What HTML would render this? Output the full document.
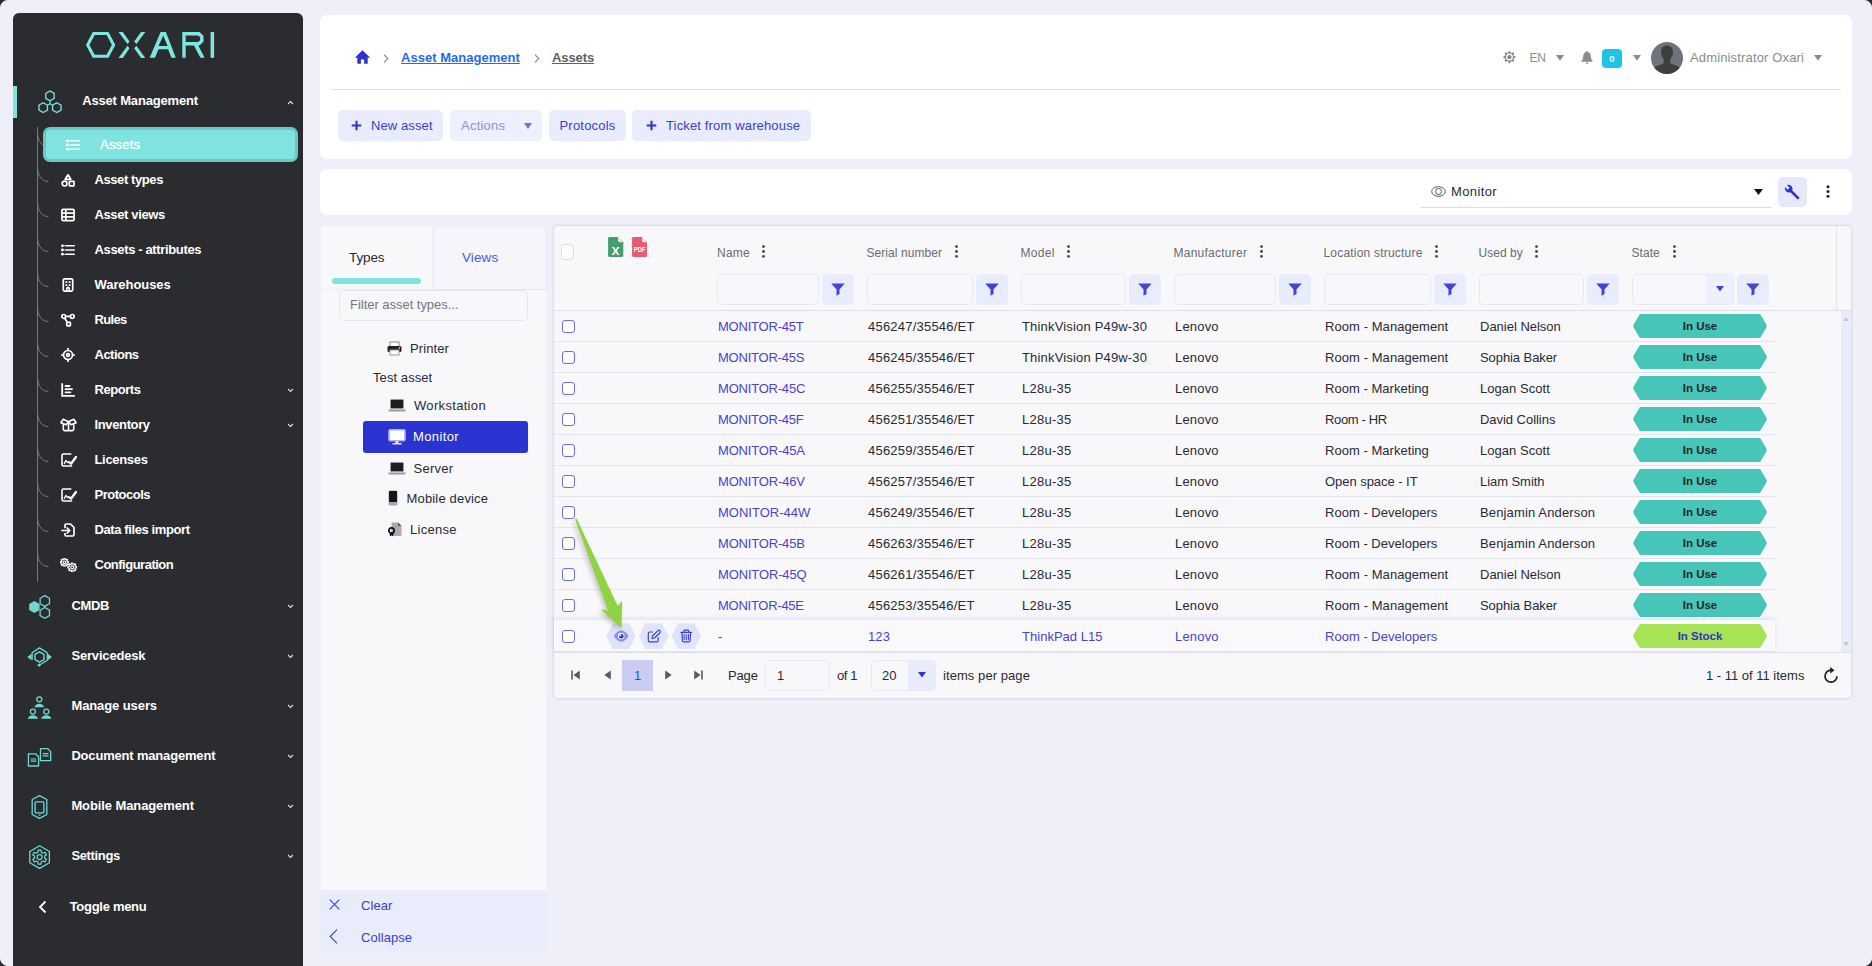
<!DOCTYPE html>
<html lang="en"><head><meta charset="utf-8"><title>Assets</title>
<style>
*{box-sizing:border-box;margin:0;padding:0}
html,body{width:1872px;height:966px;overflow:hidden}
body{background:#eeeff8;font-family:"Liberation Sans",sans-serif;font-size:13px;color:#2a2a33;position:relative}
a{text-decoration:none;color:inherit}
.abs,.sb *,.hd *,.pn *,.table *{position:absolute}
.corner{position:absolute;width:8px;height:8px;z-index:50}
.corner.tl{left:0;top:0;background:radial-gradient(circle at 8px 8px,rgba(0,0,0,0) 7.5px,#2a2a2a 8.5px)}
.corner.tr{right:0;top:0;background:radial-gradient(circle at 0 8px,rgba(0,0,0,0) 7.5px,#2a2a2a 8.5px)}
.corner.br{right:0;bottom:0;background:radial-gradient(circle at 0 0,rgba(0,0,0,0) 7.5px,#2a2a2a 8.5px)}
.corner.bl{left:0;bottom:0;background:radial-gradient(circle at 8px 0,rgba(0,0,0,0) 7.5px,#2a2a2a 8.5px)}
/* sidebar */
.sb{position:absolute;left:13px;top:13px;width:290px;height:953px;background:#2b2c2f;border-radius:6px 6px 0 0;color:#fff}
.sb .t{font-weight:bold;font-size:13px;white-space:nowrap;line-height:16px}
.sb .car{left:274px;width:7px;height:5px}
/* header */
.hd{position:absolute;left:0;top:0}
.card{position:absolute;background:#fff;border-radius:7px}
.btn{height:31px;border-radius:5px;background:#e8ecfc;color:#3b41c4;font-size:13px;line-height:31px;white-space:nowrap}
.btn span{top:0}
/* panel */
.pn{position:absolute;left:0;top:0}
.pn .ti{font-size:13px;line-height:16px;white-space:nowrap;color:#2a2a33}
/* table */
.tablebg{left:554px;top:226px;width:1297px;height:472px;background:#f8f8fb;border-radius:3px;box-shadow:0 0 2.500px rgba(0,0,0,.24)}
.row{left:0;width:1872px;height:31px}
.row::after{content:"";position:absolute;left:554px;top:30px;width:1221px;height:1px;background:#e4e5ec}
.row .c{top:8px;line-height:16px;white-space:nowrap;font-size:13px;color:#2a2a33}
.row .lnk{color:#4a43c9}
.cb{width:13px;height:13px;border:1.3px solid #6a6ee0;border-radius:3px;background:#fff}
.badge{left:1633px;top:3px;width:134px;height:24px}
.badge svg{left:0;top:0}
.badge b{left:0;top:1px;width:134px;text-align:center;line-height:23px;font-size:11.5px;color:#23262b}
.badge.stock b{color:#3b2fc9}
.row.hov{background:none}
.row.hov::before{content:"";position:absolute;left:554px;top:-1px;width:1221px;height:32px;box-shadow:0 -2px 5px rgba(130,135,215,.2);background:#f9f9fc}
.th{font-size:12px;color:#6b6b6e;top:244.700px;line-height:16px;white-space:nowrap}
.dots{width:3px;height:13px;top:245px}
.fin{top:274px;height:31px;border:1px solid #e6e8f6;border-radius:5px;background:#f8f8fb}
.fbt{top:274px;height:31px;width:32px;border-radius:5px;background:#e8ecfc}
.fbt svg{left:9px;top:9px}
.vscroll{left:1841px;top:311px;width:10px;height:341px;background:#e9ecfb}
.arrow{position:absolute;left:570px;top:510px;z-index:20;filter:drop-shadow(-1.500px 2px 2.500px rgba(0,0,0,.22))}
.pg{font-size:13px;line-height:16px;top:668px;white-space:nowrap;color:#2a2a33}
.vscroll i{left:2px;width:0;height:0;border-left:3.500px solid transparent;border-right:3.500px solid transparent}
.vscroll .up{top:6px;border-bottom:4px solid #c3c5cf}
.vscroll .dn{bottom:6px;border-top:4px solid #c3c5cf}

</style></head>
<body>
<div class="corner tl"></div><div class="corner tr"></div><div class="corner bl"></div><div class="corner br"></div>
<div class="sb">
<!-- logo -->
<svg style="left:67px;top:14px" width="140" height="36" viewBox="80 27 140 36"><g fill="none" stroke="#7ee6e1" stroke-width="3.100"><path d="M87.700 44.900L93.700 33.550H107.600L113.600 44.900L107.600 56.250H93.700Z"/><path d="M184 57.800V33.700H198.800L201.800 36.500V40.900L198.800 43.700H184" stroke-width="3.400"/></g><g fill="#7ee6e1"><path d="M118.500 31.900H122.800L129.500 41.600L127.500 44.100ZM118.500 57.900H122.800L129.500 48.200L127.500 45.700ZM145.300 31.900H141.100L134.200 41.600L136.400 44.100ZM145.300 57.900H141.100L134.200 48.200L136.400 45.700Z"/><path fill-rule="evenodd" d="M149.700 57.800L160.600 32H165.900L175.800 57.800H171.400L168.100 49.200H158.500L154.900 57.800ZM163.200 35.500L158.600 45.900H167.600Z"/><path d="M193.400 44.600H197.800L204.600 57.800H200.400Z"/><rect x="210.600" y="32" width="3.500" height="25.800"/></g></svg>
<!-- active group bar -->
<div style="left:0;top:73px;width:4px;height:32px;background:#7fe3df"></div>
<svg style="left:24px;top:75px" width="27" height="28" viewBox="37 88 27 28" fill="none" stroke="#7fe3df" stroke-width="1.300"><path d="M50.00 90.90L54.24 93.35L54.24 98.25L50.00 100.70L45.76 98.25L45.76 93.35ZM43.20 102.80L47.44 105.25L47.44 110.15L43.20 112.60L38.96 110.15L38.96 105.25ZM56.80 102.80L61.04 105.25L61.04 110.15L56.80 112.60L52.56 110.15L52.56 105.25ZM50 100.700V103.700L47.400 105.200M50 103.700L52.600 105.200"/></svg>
<span class="t" style="left:69.200px;top:80px;letter-spacing:-.17px">Asset Management</span>
<svg class="car" style="top:87px" viewBox="0 0 7 5"><path d="M1 4l2.500-2.500L6 4" fill="none" stroke="#ddd" stroke-width="1.1"/></svg>
<!-- tree line -->
<div style="left:24px;top:114px;width:1px;height:455px;background:#77797d"></div>
<svg style="left:24px;top:118px" width="14" height="17" viewBox="0 0 14 17"><path d="M.5 0C.5 9 4 15.500 11.500 15.500" fill="none" stroke="#77797d" stroke-width="1"/></svg>
<div style="left:30px;top:114px;width:255px;height:35px;background:#7fe4e0;border:3px solid #6cc7c3;border-radius:7px"></div>
<svg style="left:53px;top:125px" width="14" height="14" viewBox="0 0 14 14" ><g fill="#fff"><circle cx="1.400" cy="2.800" r="1.400"/><circle cx="1.400" cy="7" r="1.400"/><circle cx="1.400" cy="11.200" r="1.400"/><rect x="4.300" y="2" width="9.700" height="1.600" rx=".8"/><rect x="4.300" y="6.200" width="9.700" height="1.600" rx=".8"/><rect x="4.300" y="10.400" width="9.700" height="1.600" rx=".8"/><rect x="1" y="2.400" width="4" height=".8"/><rect x="1" y="6.600" width="4" height=".8"/><rect x="1" y="10.800" width="4" height=".8"/></g></svg>
<span class="t" style="left:87px;top:124px;font-weight:normal;-webkit-text-stroke:.300px #fff;letter-spacing:0.217px">Assets</span>
<svg style="left:24px;top:153px" width="14" height="17" viewBox="0 0 14 17"><path d="M.5 0C.5 9 4 15.500 11.500 15.500" fill="none" stroke="#77797d" stroke-width="1"/></svg>
<svg style="left:48px;top:160px" width="14" height="14" viewBox="0 0 14 14" ><g fill="none" stroke="#fff" stroke-width="1.7"><path d="M7 1.800L9.800 6.300H4.200Z" stroke-linejoin="round"/><circle cx="3.600" cy="10.600" r="2.400"/><rect x="8.400" y="8.300" width="4.600" height="4.600" rx=".5"/></g></svg>
<span class="t" style="left:81.500px;top:159px;letter-spacing:-0.408px">Asset types</span>
<svg style="left:24px;top:188px" width="14" height="17" viewBox="0 0 14 17"><path d="M.5 0C.5 9 4 15.500 11.500 15.500" fill="none" stroke="#77797d" stroke-width="1"/></svg>
<svg style="left:48px;top:195px" width="14" height="14" viewBox="0 0 14 14" ><g fill="none" stroke="#fff" stroke-width="1.700"><rect x=".9" y="1.400" width="12.200" height="11.200" rx="1.300"/><path d="M1 5.200h12M1 8.900h12M4.800 1.500v11"/></g></svg>
<span class="t" style="left:81.500px;top:194px;letter-spacing:-0.373px">Asset views</span>
<svg style="left:24px;top:223px" width="14" height="17" viewBox="0 0 14 17"><path d="M.5 0C.5 9 4 15.500 11.500 15.500" fill="none" stroke="#77797d" stroke-width="1"/></svg>
<svg style="left:48px;top:230px" width="14" height="14" viewBox="0 0 14 14" ><g fill="#fff"><circle cx="1.400" cy="2.800" r="1.400"/><circle cx="1.400" cy="7" r="1.400"/><circle cx="1.400" cy="11.200" r="1.400"/><rect x="4.300" y="2" width="9.700" height="1.600" rx=".8"/><rect x="4.300" y="6.200" width="9.700" height="1.600" rx=".8"/><rect x="4.300" y="10.400" width="9.700" height="1.600" rx=".8"/><rect x="1" y="2.400" width="4" height=".8"/><rect x="1" y="6.600" width="4" height=".8"/><rect x="1" y="10.800" width="4" height=".8"/></g></svg>
<span class="t" style="left:81.500px;top:229px;letter-spacing:-0.356px">Assets - attributes</span>
<svg style="left:24px;top:258px" width="14" height="17" viewBox="0 0 14 17"><path d="M.5 0C.5 9 4 15.500 11.500 15.500" fill="none" stroke="#77797d" stroke-width="1"/></svg>
<svg style="left:48px;top:265px" width="14" height="14" viewBox="0 0 14 14" ><g fill="none" stroke="#fff" stroke-width="1.700"><rect x="2.300" y=".9" width="9.400" height="12.200" rx="1.300"/></g><g fill="#fff"><rect x="4.500" y="3.200" width="1.800" height="1.800"/><rect x="7.700" y="3.200" width="1.800" height="1.800"/><rect x="4.500" y="6.200" width="1.800" height="1.800"/><rect x="7.700" y="6.200" width="1.800" height="1.800"/><path d="M5 13v-2.600a2 2 0 014 0V13h-1.500v-2.200h-1V13z"/></g></svg>
<span class="t" style="left:81.500px;top:264px;letter-spacing:-0.069px">Warehouses</span>
<svg style="left:24px;top:293px" width="14" height="17" viewBox="0 0 14 17"><path d="M.5 0C.5 9 4 15.500 11.500 15.500" fill="none" stroke="#77797d" stroke-width="1"/></svg>
<svg style="left:48px;top:300px" width="14" height="14" viewBox="0 0 14 14" ><g fill="none" stroke="#fff" stroke-width="1.700"><circle cx="2.700" cy="3.400" r="1.900"/><circle cx="11.300" cy="3.400" r="1.900"/><rect x="5.800" y="9.300" width="3.600" height="3.600" rx=".6"/><path d="M4.600 3.400h4.800M3.600 5L6.400 9.500"/></g></svg>
<span class="t" style="left:81.500px;top:299px;letter-spacing:-0.65px">Rules</span>
<svg style="left:24px;top:328px" width="14" height="17" viewBox="0 0 14 17"><path d="M.5 0C.5 9 4 15.500 11.500 15.500" fill="none" stroke="#77797d" stroke-width="1"/></svg>
<svg style="left:48px;top:335px" width="14" height="14" viewBox="0 0 14 14" ><g fill="none" stroke="#fff" stroke-width="1.700"><circle cx="7" cy="7" r="4.500"/><circle cx="7" cy="7" r="1.400"/><path d="M7 0v2.500M7 11.500V14M0 7h2.500M11.500 7H14"/></g></svg>
<span class="t" style="left:81.500px;top:334px;letter-spacing:-0.512px">Actions</span>
<svg style="left:24px;top:363px" width="14" height="17" viewBox="0 0 14 17"><path d="M.5 0C.5 9 4 15.500 11.500 15.500" fill="none" stroke="#77797d" stroke-width="1"/></svg>
<svg style="left:48px;top:370px" width="14" height="14" viewBox="0 0 14 14" ><g fill="none" stroke="#fff" stroke-width="1.800" stroke-linecap="round"><path d="M1.200 .9v12h12M4.500 3h4M4.500 6.200h6.500M4.500 9.400h4.800"/></g></svg>
<span class="t" style="left:81.500px;top:369px;letter-spacing:-0.453px">Reports</span>
<svg class="car" style="top:375px" viewBox="0 0 7 5"><path d="M1 1l2.500 2.500L6 1" fill="none" stroke="#ddd" stroke-width="1.100"/></svg>
<svg style="left:24px;top:398px" width="14" height="17" viewBox="0 0 14 17"><path d="M.5 0C.5 9 4 15.500 11.500 15.500" fill="none" stroke="#77797d" stroke-width="1"/></svg>
<svg style="left:46.5px;top:405px" width="17" height="14" viewBox="0 0 17 14" ><g fill="none" stroke="#fff" stroke-width="1.600" stroke-linejoin="round"><path d="M3.300 6.500V11.300Q3.300 12.600 4.600 12.600H12.400Q13.700 12.600 13.700 11.300V6.500M8.500 3.800V12.600M8.500 3.800L3.200 1.300L.9 4.700L6 6.700ZM8.500 3.800L13.800 1.300L16.100 4.700L11 6.700Z"/></g></svg>
<span class="t" style="left:81.500px;top:404px;letter-spacing:-0.364px">Inventory</span>
<svg class="car" style="top:410px" viewBox="0 0 7 5"><path d="M1 1l2.500 2.500L6 1" fill="none" stroke="#ddd" stroke-width="1.100"/></svg>
<svg style="left:24px;top:433px" width="14" height="17" viewBox="0 0 14 17"><path d="M.5 0C.5 9 4 15.500 11.500 15.500" fill="none" stroke="#77797d" stroke-width="1"/></svg>
<svg style="left:47.5px;top:440px" width="16" height="14" viewBox="0 0 16 14" ><g fill="none" stroke="#fff" stroke-linejoin="round" stroke-linecap="round"><path d="M9.800 1H2.600Q1 1 1 2.600V11.400Q1 13 2.600 13H10.600" stroke-width="1.600"/><path d="M3.200 10.600L5 7.400L6.400 9.600L7.600 8.600" stroke-width="1.200"/><path d="M8.300 9.300L10 10.700L15 4" stroke-width="2.300"/></g></svg>
<span class="t" style="left:81.500px;top:439px;letter-spacing:-0.32px">Licenses</span>
<svg style="left:24px;top:468px" width="14" height="17" viewBox="0 0 14 17"><path d="M.5 0C.5 9 4 15.500 11.500 15.500" fill="none" stroke="#77797d" stroke-width="1"/></svg>
<svg style="left:47.5px;top:475px" width="16" height="14" viewBox="0 0 16 14" ><g fill="none" stroke="#fff" stroke-linejoin="round" stroke-linecap="round"><path d="M9.800 1H2.600Q1 1 1 2.600V11.400Q1 13 2.600 13H10.600" stroke-width="1.600"/><path d="M3.200 10.600L5 7.400L6.400 9.600L7.600 8.600" stroke-width="1.200"/><path d="M8.300 9.300L10 10.700L15 4" stroke-width="2.300"/></g></svg>
<span class="t" style="left:81.500px;top:474px;letter-spacing:-0.482px">Protocols</span>
<svg style="left:24px;top:503px" width="14" height="17" viewBox="0 0 14 17"><path d="M.5 0C.5 9 4 15.500 11.500 15.500" fill="none" stroke="#77797d" stroke-width="1"/></svg>
<svg style="left:48px;top:510px" width="14" height="14" viewBox="0 0 14 14" ><g fill="none" stroke="#fff" stroke-width="1.700" stroke-linejoin="round" stroke-linecap="round"><path d="M4 4.500V2.200Q4 1 5.200 1H9.500L13 4.500v7.300Q13 13 11.800 13H5.200Q4 13 4 11.800V10.500M.8 7.500H8.500M6.200 5L8.700 7.500 6.200 10"/></g></svg>
<span class="t" style="left:81.500px;top:509px;letter-spacing:-0.397px">Data files import</span>
<svg style="left:24px;top:538px" width="14" height="17" viewBox="0 0 14 17"><path d="M.5 0C.5 9 4 15.500 11.500 15.500" fill="none" stroke="#77797d" stroke-width="1"/></svg>
<svg style="left:46.5px;top:545px" width="17" height="14" viewBox="0 0 17 14" ><g fill="none" stroke="#fff" stroke-width="1.150" stroke-linejoin="round"><path d="M3.77 0.35L5.03 0.35L5.08 1.48L5.92 1.83L6.75 1.06L7.64 1.95L6.87 2.78L7.22 3.62L8.35 3.67L8.35 4.93L7.22 4.98L6.87 5.82L7.64 6.65L6.75 7.54L5.92 6.77L5.08 7.12L5.03 8.25L3.77 8.25L3.72 7.12L2.88 6.77L2.05 7.54L1.16 6.65L1.93 5.82L1.58 4.98L0.45 4.93L0.45 3.67L1.58 3.62L1.93 2.78L1.16 1.95L2.05 1.06L2.88 1.83L3.72 1.48Z"/><circle cx="4.400" cy="4.300" r="1.300"/><path d="M11.51 4.95L12.89 4.95L12.95 6.19L13.87 6.57L14.79 5.74L15.76 6.71L14.93 7.63L15.31 8.55L16.55 8.61L16.55 9.99L15.31 10.05L14.93 10.97L15.76 11.89L14.79 12.86L13.87 12.03L12.95 12.41L12.89 13.65L11.51 13.65L11.45 12.41L10.53 12.03L9.61 12.86L8.64 11.89L9.47 10.97L9.09 10.05L7.85 9.99L7.85 8.61L9.09 8.55L9.47 7.63L8.64 6.71L9.61 5.74L10.53 6.57L11.45 6.19Z"/><circle cx="12.200" cy="9.300" r="1.500"/></g></svg>
<span class="t" style="left:81.500px;top:544px;letter-spacing:-0.5px">Configuration</span>
<svg style="left:14px;top:581px" width="25" height="26" viewBox="-0.500 0 25 26" ><path d="M6.90 7.00L12.10 10.00L12.10 16.00L6.90 19.00L1.70 16.00L1.70 10.00Z" fill="#6fd8d3"/><g fill="none" stroke="#6fd8d3" stroke-width="1.300"><path d="M17.30 1.60L21.98 4.30L21.98 9.70L17.30 12.40L12.62 9.70L12.62 4.30Z"/><path d="M17.30 13.50L21.98 16.20L21.98 21.60L17.30 24.30L12.62 21.60L12.62 16.20Z"/></g></svg>
<span class="t" style="left:58.400px;top:585px;letter-spacing:-0.298px">CMDB</span>
<svg class="car" style="top:591px" viewBox="0 0 7 5"><path d="M1 1l2.500 2.500L6 1" fill="none" stroke="#ddd" stroke-width="1.100"/></svg>
<svg style="left:14px;top:631px" width="25" height="26" viewBox="-0.500 0 25 26" ><g fill="none" stroke="#6fd8d3" stroke-width="1.300" stroke-linejoin="round"><path d="M12.00 7.80L16.50 10.40L16.50 15.60L12.00 18.20L7.50 15.60L7.50 10.40Z" stroke-width="1.400"/><path d="M4.600 16V8.800L12 3.900L19.800 8.800V16.200L12.500 20.800"/></g><path d="M4 9.800V16.200L-.2 13ZM20.400 9.800V16.200L24.400 13Z" fill="#6fd8d3"/><circle cx="11.600" cy="21.100" r="1.500" fill="#6fd8d3"/></svg>
<span class="t" style="left:58.400px;top:635px;letter-spacing:-0.169px">Servicedesk</span>
<svg class="car" style="top:641px" viewBox="0 0 7 5"><path d="M1 1l2.500 2.500L6 1" fill="none" stroke="#ddd" stroke-width="1.100"/></svg>
<svg style="left:14px;top:681px" width="25" height="26" viewBox="-0.500 0 25 26" ><g fill="none" stroke="#6fd8d3" stroke-width="1.300"><circle cx="11.800" cy="5.300" r="2.500"/><circle cx="5.400" cy="17.600" r="2.500"/><circle cx="18.800" cy="17.600" r="2.500"/></g><g fill="#6fd8d3"><path d="M7 13.200Q8 9.700 11.800 9.700T16.700 13.200Z"/><path d="M.2 24.800Q1.400 21.300 5.400 21.300T10.600 24.800Z"/><path d="M13.600 24.800Q14.800 21.300 18.800 21.300T24 24.800Z"/></g></svg>
<span class="t" style="left:58.400px;top:685px;letter-spacing:-0.091px">Manage users</span>
<svg class="car" style="top:691px" viewBox="0 0 7 5"><path d="M1 1l2.500 2.500L6 1" fill="none" stroke="#ddd" stroke-width="1.100"/></svg>
<svg style="left:14px;top:731px" width="25" height="26" viewBox="-0.500 0 25 26" ><g fill="none" stroke="#6fd8d3" stroke-width="1.300" stroke-linejoin="round"><path d="M13 4.700H20.300L23.200 7.600V16.600H13ZM.9 9.800H8.200L11.100 12.700V22H.9Z"/><path d="M15.300 9.700H21M15.300 11.900H21M3.100 15H8.800M3.100 17.200H8.800" stroke-width="1.200"/></g></svg>
<span class="t" style="left:58.400px;top:735px;letter-spacing:-0.181px">Document management</span>
<svg class="car" style="top:741px" viewBox="0 0 7 5"><path d="M1 1l2.500 2.500L6 1" fill="none" stroke="#ddd" stroke-width="1.100"/></svg>
<svg style="left:14px;top:781px" width="25" height="26" viewBox="-0.500 0 25 26" ><g fill="none" stroke="#6fd8d3" stroke-width="1.300" stroke-linejoin="round"><path d="M12 1.600L19.300 5.500V20.500L12 24.300L4.700 20.500V5.500Z"/><rect x="7.600" y="7.900" width="8.800" height="11" rx="1"/><path d="M11 21H13" stroke-width="1.100"/></g></svg>
<span class="t" style="left:58.400px;top:785px;letter-spacing:-0.102px">Mobile Management</span>
<svg class="car" style="top:791px" viewBox="0 0 7 5"><path d="M1 1l2.500 2.500L6 1" fill="none" stroke="#ddd" stroke-width="1.100"/></svg>
<svg style="left:14px;top:831px" width="25" height="26" viewBox="-0.500 0 25 26" ><g fill="none" stroke="#6fd8d3" stroke-width="1.300" stroke-linejoin="round"><path d="M12.10 1.80L21.89 7.45L21.89 18.75L12.10 24.40L2.31 18.75L2.31 7.45Z"/><path d="M10.60 6.06L13.60 6.06L13.71 8.15L15.58 9.24L17.45 8.28L18.95 10.88L17.19 12.02L17.19 14.18L18.95 15.32L17.45 17.92L15.58 16.96L13.71 18.05L13.60 20.14L10.60 20.14L10.49 18.05L8.62 16.96L6.75 17.92L5.25 15.32L7.01 14.18L7.01 12.02L5.25 10.88L6.75 8.28L8.62 9.24L10.49 8.15Z" stroke-width="1.200"/><circle cx="12.100" cy="13.100" r="2.500" stroke-width="1.200"/></g></svg>
<span class="t" style="left:58.400px;top:835px;letter-spacing:-0.34px">Settings</span>
<svg class="car" style="top:841px" viewBox="0 0 7 5"><path d="M1 1l2.500 2.500L6 1" fill="none" stroke="#ddd" stroke-width="1.100"/></svg>
<svg style="left:25px;top:887px" width="9" height="14" viewBox="0 0 9 14"><path d="M7.500 1.500L2 7l5.500 5.500" fill="none" stroke="#fff" stroke-width="1.8"/></svg>
<span class="t" style="left:56.700px;top:886px;letter-spacing:-.29px">Toggle menu</span>
</div>

<div class="hd">
<div class="card" style="left:320px;top:15px;width:1532px;height:144px"></div>
<!-- breadcrumb -->
<svg style="left:355px;top:50px" width="15" height="14" viewBox="0 0 15 14"><path d="M7.500 .3L.3 7.200Q0 7.600.6 7.800H2.300V13.300Q2.300 13.800 2.800 13.800H5.900V9.600H9.100V13.800H12.200Q12.700 13.800 12.700 13.300V7.800H14.400Q15 7.600 14.700 7.200Z" fill="#2b33d1"/></svg>
<svg style="left:383px;top:54px" width="6" height="9" viewBox="0 0 6 9"><path d="M1 .7L4.700 4.500 1 8.300" fill="none" stroke="#8a8a90" stroke-width="1.200"/></svg>
<a style="left:401px;top:50px;font-weight:bold;font-size:13px;line-height:16px;color:#1f6bf2;text-decoration:underline;white-space:nowrap;letter-spacing:.02px">Asset Management</a>
<svg style="left:534px;top:54px" width="6" height="9" viewBox="0 0 6 9"><path d="M1 .7L4.700 4.500 1 8.300" fill="none" stroke="#7d86d8" stroke-width="1.200"/></svg>
<a style="left:552px;top:50px;font-weight:bold;font-size:13px;line-height:16px;color:#5d5f66;text-decoration:underline;white-space:nowrap;letter-spacing:-.1px">Assets</a>
<div style="left:331px;top:89px;width:1510px;height:1px;background:#dfe1e6"></div>
<!-- right tools -->
<svg style="left:1502px;top:50px" width="15" height="15" viewBox="0 0 15 15"><path d="M7.40 0.40L9.12 2.94L12.14 2.36L11.56 5.38L14.10 7.10L11.56 8.82L12.14 11.84L9.12 11.26L7.40 13.80L5.68 11.26L2.66 11.84L3.24 8.82L0.70 7.10L3.24 5.38L2.66 2.36L5.68 2.94Z" fill="#8b8b8b"/><circle cx="7.400" cy="7.100" r="3.500" fill="#fff"/><circle cx="7.400" cy="7.100" r="2.200" fill="#8b8b8b"/></svg>
<span style="left:1529.500px;top:50px;font-size:12px;line-height:16px;color:#8a8a8e;letter-spacing:-.2px">EN</span>
<svg style="left:1556px;top:55px" width="8" height="6" viewBox="0 0 8 6"><path d="M0 0h8L4 5.800z" fill="#8b8b8b"/></svg>
<svg style="left:1581.300px;top:51px" width="12" height="14" viewBox="0 0 12 14"><path d="M6 0Q6.800 0 6.800 1Q9.800 1.800 9.800 5.500Q9.800 8.700 11.500 9.800V10.700H.5V9.800Q2.200 8.700 2.200 5.500Q2.200 1.800 5.200 1Q5.200 0 6 0ZM4.700 11.600H7.300Q7.300 13 6 13Q4.700 13 4.700 11.600Z" fill="#8c8c8c"/></svg>
<div style="left:1602px;top:49px;width:20px;height:19px;border-radius:4px;background:#1cc4e8"></div>
<span style="left:1602px;top:51px;width:20px;text-align:center;font-size:9.500px;line-height:16px;color:#fff;font-weight:bold">0</span>
<svg style="left:1633px;top:55px" width="8" height="6" viewBox="0 0 8 6"><path d="M0 0h8L4 5.800z" fill="#8b8b8b"/></svg>
<svg style="left:1651px;top:42px" width="32" height="32" viewBox="0 0 32 32"><defs><clipPath id="av"><circle cx="16" cy="16" r="16"/></clipPath></defs><circle cx="16" cy="16" r="16" fill="#6d747c"/><g clip-path="url(#av)" fill="#3e3f41"><rect x="10" y="3.600" width="12" height="13.600" rx="5.500" ry="6"/><path d="M3 32V27Q3.300 24.800 7 23.600L12.600 21.400V15H19.400V21.400L25 23.600Q28.700 24.800 29 27V32Z"/></g></svg>
<span style="left:1690px;top:50px;font-size:13px;line-height:16px;color:#8a8a8e;white-space:nowrap;letter-spacing:0.147px">Administrator Oxari</span>
<svg style="left:1814px;top:55px" width="8" height="6" viewBox="0 0 8 6"><path d="M0 0h8L4 5.800z" fill="#8b8b8b"/></svg>
<!-- buttons -->
<div class="btn" style="left:338px;top:110px;width:105px"><svg style="left:13px;top:10px" width="11" height="11" viewBox="0 0 11 11"><path d="M5.500 .7v9.600M.7 5.500h9.600" stroke="#2b33d1" stroke-width="2.100" fill="none"/></svg><span style="left:33px;letter-spacing:0.101px">New asset</span></div>
<div class="btn" style="left:450px;top:110px;width:92px;background:#eef0fd;color:#8b8fdc"><span style="left:11px;letter-spacing:0.228px">Actions</span><i style="left:64px;top:0;width:1px;height:31px;background:#e9ebfa"></i><svg style="left:74px;top:13px" width="8" height="6" viewBox="0 0 8 6"><path d="M0 0h8L4 6z" fill="#6f74d6"/></svg></div>
<div class="btn" style="left:549px;top:110px;width:77px"><span style="left:10.500px;letter-spacing:0.201px">Protocols</span></div>
<div class="btn" style="left:632px;top:110px;width:179px"><svg style="left:14px;top:10px" width="11" height="11" viewBox="0 0 11 11"><path d="M5.500 .7v9.600M.7 5.500h9.600" stroke="#2b33d1" stroke-width="2.100" fill="none"/></svg><span style="left:34px;letter-spacing:0.15px">Ticket from warehouse</span></div>
<!-- second card -->
<div class="card" style="left:320px;top:169px;width:1532px;height:46px"></div>
<svg style="left:1431px;top:185px" width="15" height="13" viewBox="0 0 15 13"><g fill="none" stroke="#55555c" stroke-width="1"><ellipse cx="7.500" cy="6.500" rx="6.800" ry="4.800"/><circle cx="7.500" cy="6.500" r="3"/></g></svg>
<span style="left:1451px;top:184px;font-size:13px;line-height:16px;color:#2a2a33;letter-spacing:0.376px">Monitor</span>
<svg style="left:1754px;top:189px" width="9" height="6" viewBox="0 0 9 6"><path d="M0 0h9L4.500 6z" fill="#111"/></svg>
<div style="left:1421px;top:207px;width:350px;height:1px;background:#dcdde3"></div>
<div style="left:1778px;top:177px;width:29px;height:30px;border-radius:5px;background:#e5e9fb"></div>
<svg style="left:1784px;top:184px" width="16" height="16" viewBox="0 0 16 16"><path d="M15.300 13.400L8.300 6.400Q9.200 4 7.300 2.100Q5.300 .2 2.900 1L5.700 3.800 3.800 5.700 1 2.900Q.1 5.300 2.100 7.300Q4 9.200 6.400 8.300L13.400 15.300Q13.800 15.600 14.200 15.300L15.300 14.200Q15.600 13.800 15.300 13.400Z" fill="#2b33d1"/></svg>
<svg style="left:1826px;top:185px" width="4" height="13" viewBox="0 0 4 13"><g fill="#222"><circle cx="2" cy="1.700" r="1.500"/><circle cx="2" cy="6.500" r="1.500"/><circle cx="2" cy="11.300" r="1.500"/></g></svg>
</div>

<div class="pn">
<div style="left:321px;top:226px;width:111px;height:64px;background:#f8f8fb;border-radius:3px 3px 0 0"></div>
<div style="left:434px;top:226px;width:113px;height:64px;background:#f5f5fa;border-radius:3px 3px 0 0;border:1px solid #e9ecfa;border-bottom:1px solid #e2e4ee"></div><div style="left:321px;top:289px;width:113px;height:1px;background:#ededf3"></div>
<div style="left:321px;top:290px;width:225px;height:601px;background:#f8f8fb;border-bottom:1px solid #e2e3ea"></div>
<span style="left:349px;top:250px;font-size:13.500px;line-height:16px;color:#2a2a33;letter-spacing:-0.104px">Types</span>
<div style="left:332px;top:278px;width:89px;height:6px;border-radius:3px;background:#7fe3df"></div>
<span style="left:462px;top:250px;font-size:13.500px;line-height:16px;color:#3e5cf0;letter-spacing:0.108px">Views</span>
<div style="left:339px;top:290px;width:189px;height:31px;border:1px solid #e3e6f7;border-radius:5px;background:#f8f8fb"></div>
<span style="left:350px;top:297px;font-size:13px;line-height:16px;color:#75757c;white-space:nowrap;letter-spacing:-0.029px">Filter asset types...</span>
<!-- tree -->
<svg style="left:387px;top:341px" width="15" height="15" viewBox="0 0 15 15"><rect x="3" y="1" width="9" height="5" fill="#fff" stroke="#888" stroke-width="1"/><rect x=".5" y="5" width="14" height="6" rx="1.500" fill="#222"/><rect x="3" y="9" width="9" height="5" fill="#fff" stroke="#999" stroke-width="1"/><circle cx="12.300" cy="7" r=".8" fill="#fff"/></svg>
<span class="ti" style="left:410px;top:341px;letter-spacing:0.102px">Printer</span>
<span class="ti" style="left:373px;top:370px;letter-spacing:0.075px">Test asset</span>
<svg style="left:388px;top:399px" width="18" height="13" viewBox="0 0 18 13"><rect x="2.500" y=".5" width="13" height="9" rx="1" fill="#1d1d22" stroke="#999" stroke-width="1"/><path d="M0 10.500h18l-1 2H1z" fill="#9a9a9f"/></svg>
<span class="ti" style="left:414px;top:398px;letter-spacing:0.321px">Workstation</span>
<div style="left:363px;top:421px;width:165px;height:32px;border-radius:3px;background:#2b33d1"></div>
<svg style="left:388px;top:429px" width="18" height="16" viewBox="0 0 18 16"><rect x="1" y=".8" width="16" height="11" rx="1.200" fill="#fff" stroke="#b9a8ee" stroke-width="1.600"/><path d="M7.500 12h3v2h-3zM4.500 14h9v1.500h-9z" fill="#e8e4fb"/></svg>
<span class="ti" style="left:413px;top:429px;color:#fff;letter-spacing:0.376px">Monitor</span>
<svg style="left:388px;top:462px" width="18" height="13" viewBox="0 0 18 13"><rect x="2.500" y=".5" width="13" height="9" rx="1" fill="#1d1d22" stroke="#999" stroke-width="1"/><path d="M0 10.500h18l-1 2H1z" fill="#9a9a9f"/></svg>
<span class="ti" style="left:413.500px;top:461px;letter-spacing:0.282px">Server</span>
<svg style="left:388px;top:490px" width="10" height="16" viewBox="0 0 10 16"><rect x=".5" y=".5" width="9" height="15" rx="1.500" fill="#a5a5aa"/><rect x="1" y="1" width="8" height="11" rx=".8" fill="#17171b"/></svg>
<span class="ti" style="left:406.500px;top:491px;letter-spacing:0.168px">Mobile device</span>
<svg style="left:387px;top:521px" width="16" height="16" viewBox="0 0 16 16"><path d="M4.500 1.500H11L14.500 5v10h-10z" fill="#aaaab0"/><path d="M11 1.500V5h3.500z" fill="#55555a"/><circle cx="4.500" cy="9.500" r="2.700" fill="none" stroke="#111" stroke-width="1.700"/><path d="M2.800 11.500v4l1.700-1.300 1.700 1.300v-4z" fill="#111"/></svg>
<span class="ti" style="left:410px;top:522px;letter-spacing:0.265px">License</span>
<!-- clear/collapse -->
<div style="left:320px;top:890px;width:227px;height:63px;background:#e9ecfb;border-radius:0 0 7px 7px"></div>
<svg style="left:329px;top:899px" width="11" height="11" viewBox="0 0 11 11"><path d="M.7 .7l9.600 9.600M10.300 .7L.7 10.300" stroke="#3b41c4" stroke-width="1.100" fill="none"/></svg>
<span class="ti" style="left:361px;top:898px;color:#3b41c4;letter-spacing:0.059px">Clear</span>
<svg style="left:329px;top:929px" width="9" height="15" viewBox="0 0 9 15"><path d="M8 .7L1.200 7.500 8 14.300" stroke="#3b41c4" stroke-width="1.100" fill="none"/></svg>
<span class="ti" style="left:361px;top:930px;color:#3b41c4;letter-spacing:0.074px">Collapse</span>
</div>

<div class="table">
<div class="tablebg"></div>
<div style="left:554px;top:310px;width:1297px;height:1px;background:#dedfe6"></div>
<div style="left:1836px;top:226px;width:1px;height:84px;background:#e3e4ea"></div>
<span style="left:561px;top:244px;width:13px;height:16px;border:1px solid #dcdde6;border-radius:4px;background:#fff"></span>
<svg style="left:608.300px;top:236.500px" width="15.400" height="20" viewBox="0 0 16 21"><path d="M1.500 0H10.500L16 5.500V19.500Q16 21 14.500 21H1.500Q0 21 0 19.500V1.500Q0 0 1.500 0Z" fill="#459e6f"/><path d="M10.500 0V4Q10.500 5.500 12 5.500H16Z" fill="#e4f3ea"/><path d="M4 10.500h2.300L8 13.300 9.700 10.500H12L9.200 14.700 12.100 19H9.800L8 16.100 6.200 19H3.900L6.800 14.700Z" fill="#fff"/></svg>
<svg style="left:631.500px;top:236.500px" width="15.400" height="20" viewBox="0 0 16 21"><path d="M1.500 0H10.500L16 5.500V19.500Q16 21 14.500 21H1.500Q0 21 0 19.500V1.500Q0 0 1.500 0Z" fill="#e45c6e"/><path d="M10.500 0V4Q10.500 5.500 12 5.500H16Z" fill="#fbe3e6"/><text x="8" y="15.500" font-family="Liberation Sans, sans-serif" font-size="7" font-weight="bold" fill="#fff" text-anchor="middle" textLength="12.500" lengthAdjust="spacingAndGlyphs" style="position:static">PDF</text></svg>
<span class="th" style="left:717px;letter-spacing:0.23px">Name</span>
<svg class="dots" style="left:762.0px" viewBox="0 0 3 13"><g fill="#44444a"><circle cx="1.500" cy="1.600" r="1.400"/><circle cx="1.500" cy="6.500" r="1.400"/><circle cx="1.500" cy="11.400" r="1.400"/></g></svg>
<div class="fin" style="left:717px;width:102px"></div>
<div class="fbt" style="left:822px"><svg width="14" height="13" viewBox="0 0 14 13"><path d="M.3 .5h13.400L8.500 6.500V11L5.500 12.800V6.500z" fill="#3f46d2"/></svg></div>
<span class="th" style="left:866.5px;letter-spacing:0.058px">Serial number</span>
<svg class="dots" style="left:955.0px" viewBox="0 0 3 13"><g fill="#44444a"><circle cx="1.500" cy="1.600" r="1.400"/><circle cx="1.500" cy="6.500" r="1.400"/><circle cx="1.500" cy="11.400" r="1.400"/></g></svg>
<div class="fin" style="left:867px;width:106px"></div>
<div class="fbt" style="left:976px"><svg width="14" height="13" viewBox="0 0 14 13"><path d="M.3 .5h13.400L8.500 6.500V11L5.500 12.800V6.500z" fill="#3f46d2"/></svg></div>
<span class="th" style="left:1020.5px;letter-spacing:0.279px">Model</span>
<svg class="dots" style="left:1067.0px" viewBox="0 0 3 13"><g fill="#44444a"><circle cx="1.500" cy="1.600" r="1.400"/><circle cx="1.500" cy="6.500" r="1.400"/><circle cx="1.500" cy="11.400" r="1.400"/></g></svg>
<div class="fin" style="left:1021px;width:105px"></div>
<div class="fbt" style="left:1129px"><svg width="14" height="13" viewBox="0 0 14 13"><path d="M.3 .5h13.400L8.500 6.500V11L5.500 12.800V6.500z" fill="#3f46d2"/></svg></div>
<span class="th" style="left:1173.5px;letter-spacing:0.245px">Manufacturer</span>
<svg class="dots" style="left:1260.0px" viewBox="0 0 3 13"><g fill="#44444a"><circle cx="1.500" cy="1.600" r="1.400"/><circle cx="1.500" cy="6.500" r="1.400"/><circle cx="1.500" cy="11.400" r="1.400"/></g></svg>
<div class="fin" style="left:1174px;width:102px"></div>
<div class="fbt" style="left:1279px"><svg width="14" height="13" viewBox="0 0 14 13"><path d="M.3 .5h13.400L8.500 6.500V11L5.500 12.800V6.500z" fill="#3f46d2"/></svg></div>
<span class="th" style="left:1323.5px;letter-spacing:0.201px">Location structure</span>
<svg class="dots" style="left:1435.0px" viewBox="0 0 3 13"><g fill="#44444a"><circle cx="1.500" cy="1.600" r="1.400"/><circle cx="1.500" cy="6.500" r="1.400"/><circle cx="1.500" cy="11.400" r="1.400"/></g></svg>
<div class="fin" style="left:1324px;width:107px"></div>
<div class="fbt" style="left:1434px"><svg width="14" height="13" viewBox="0 0 14 13"><path d="M.3 .5h13.400L8.500 6.500V11L5.500 12.800V6.500z" fill="#3f46d2"/></svg></div>
<span class="th" style="left:1478.5px;letter-spacing:0.029px">Used by</span>
<svg class="dots" style="left:1535.0px" viewBox="0 0 3 13"><g fill="#44444a"><circle cx="1.500" cy="1.600" r="1.400"/><circle cx="1.500" cy="6.500" r="1.400"/><circle cx="1.500" cy="11.400" r="1.400"/></g></svg>
<div class="fin" style="left:1479px;width:105px"></div>
<div class="fbt" style="left:1587px"><svg width="14" height="13" viewBox="0 0 14 13"><path d="M.3 .5h13.400L8.500 6.500V11L5.500 12.800V6.500z" fill="#3f46d2"/></svg></div>
<span class="th" style="left:1631.500px;letter-spacing:0.045px">State</span>
<svg class="dots" style="left:1673.0px" viewBox="0 0 3 13"><g fill="#44444a"><circle cx="1.500" cy="1.600" r="1.400"/><circle cx="1.500" cy="6.500" r="1.400"/><circle cx="1.500" cy="11.400" r="1.400"/></g></svg>
<div class="fin" style="left:1632px;width:102px"></div>
<div style="left:1706px;top:275px;width:27px;height:29px;background:#eef0fd;border-radius:0 4px 4px 0"></div>
<svg style="left:1716px;top:286px" width="8" height="6" viewBox="0 0 8 6"><path d="M0 0h8L4 5.500z" fill="#3f46d2"/></svg>
<div class="fbt" style="left:1737px"><svg width="14" height="13" viewBox="0 0 14 13"><path d="M.3 .5h13.400L8.500 6.500V11L5.500 12.800V6.500z" fill="#3f46d2"/></svg></div>
<div class="row" style="top:311px">
<span class="cb" style="left:562px;top:9px"></span>
<a class="c lnk" style="left:718px;letter-spacing:-0.208px">MONITOR-45T</a>
<span class="c c1" style="left:868px;letter-spacing:0.217px">456247/35546/ET</span>
<span class="c c2" style="left:1022px;letter-spacing:0.173px">ThinkVision P49w-30</span>
<span class="c c3" style="left:1175px;letter-spacing:0.19px">Lenovo</span>
<span class="c c4" style="left:1325px;letter-spacing:0.068px">Room - Management</span>
<span class="c c5" style="left:1480px;letter-spacing:-0.011px">Daniel Nelson</span>
<span class="badge use"><svg width="134" height="24" viewBox="0 0 134 24"><path d="M6.100 1.200Q6.700 0 8.100 0H125.900Q127.300 0 127.900 1.200L133.500 10.800Q134 12 133.500 13.200L127.900 22.800Q127.300 24 125.900 24H8.100Q6.700 24 6.100 22.800L.5 13.200Q0 12 .5 10.800Z" fill="#48c5b9"/></svg><b>In Use</b></span>
</div>
<div class="row" style="top:342px">
<span class="cb" style="left:562px;top:9px"></span>
<a class="c lnk" style="left:718px;letter-spacing:-0.221px">MONITOR-45S</a>
<span class="c c1" style="left:868px;letter-spacing:0.217px">456245/35546/ET</span>
<span class="c c2" style="left:1022px;letter-spacing:0.173px">ThinkVision P49w-30</span>
<span class="c c3" style="left:1175px;letter-spacing:0.19px">Lenovo</span>
<span class="c c4" style="left:1325px;letter-spacing:0.068px">Room - Management</span>
<span class="c c5" style="left:1480px;letter-spacing:-0.077px">Sophia Baker</span>
<span class="badge use"><svg width="134" height="24" viewBox="0 0 134 24"><path d="M6.100 1.200Q6.700 0 8.100 0H125.900Q127.300 0 127.900 1.200L133.500 10.800Q134 12 133.500 13.200L127.900 22.800Q127.300 24 125.900 24H8.100Q6.700 24 6.100 22.800L.5 13.200Q0 12 .5 10.800Z" fill="#48c5b9"/></svg><b>In Use</b></span>
</div>
<div class="row" style="top:373px">
<span class="cb" style="left:562px;top:9px"></span>
<a class="c lnk" style="left:718px;letter-spacing:-0.202px">MONITOR-45C</a>
<span class="c c1" style="left:868px;letter-spacing:0.217px">456255/35546/ET</span>
<span class="c c2" style="left:1022px;letter-spacing:0.249px">L28u-35</span>
<span class="c c3" style="left:1175px;letter-spacing:0.19px">Lenovo</span>
<span class="c c4" style="left:1325px;letter-spacing:0.033px">Room - Marketing</span>
<span class="c c5" style="left:1480px;letter-spacing:0.042px">Logan Scott</span>
<span class="badge use"><svg width="134" height="24" viewBox="0 0 134 24"><path d="M6.100 1.200Q6.700 0 8.100 0H125.900Q127.300 0 127.900 1.200L133.500 10.800Q134 12 133.500 13.200L127.900 22.800Q127.300 24 125.900 24H8.100Q6.700 24 6.100 22.800L.5 13.200Q0 12 .5 10.800Z" fill="#48c5b9"/></svg><b>In Use</b></span>
</div>
<div class="row" style="top:404px">
<span class="cb" style="left:562px;top:9px"></span>
<a class="c lnk" style="left:718px;letter-spacing:-0.208px">MONITOR-45F</a>
<span class="c c1" style="left:868px;letter-spacing:0.217px">456251/35546/ET</span>
<span class="c c2" style="left:1022px;letter-spacing:0.249px">L28u-35</span>
<span class="c c3" style="left:1175px;letter-spacing:0.19px">Lenovo</span>
<span class="c c4" style="left:1325px;letter-spacing:-0.351px">Room - HR</span>
<span class="c c5" style="left:1480px;letter-spacing:-0.038px">David Collins</span>
<span class="badge use"><svg width="134" height="24" viewBox="0 0 134 24"><path d="M6.100 1.200Q6.700 0 8.100 0H125.900Q127.300 0 127.900 1.200L133.500 10.800Q134 12 133.500 13.200L127.900 22.800Q127.300 24 125.900 24H8.100Q6.700 24 6.100 22.800L.5 13.200Q0 12 .5 10.800Z" fill="#48c5b9"/></svg><b>In Use</b></span>
</div>
<div class="row" style="top:435px">
<span class="cb" style="left:562px;top:9px"></span>
<a class="c lnk" style="left:718px;letter-spacing:-0.161px">MONITOR-45A</a>
<span class="c c1" style="left:868px;letter-spacing:0.217px">456259/35546/ET</span>
<span class="c c2" style="left:1022px;letter-spacing:0.249px">L28u-35</span>
<span class="c c3" style="left:1175px;letter-spacing:0.19px">Lenovo</span>
<span class="c c4" style="left:1325px;letter-spacing:0.033px">Room - Marketing</span>
<span class="c c5" style="left:1480px;letter-spacing:0.042px">Logan Scott</span>
<span class="badge use"><svg width="134" height="24" viewBox="0 0 134 24"><path d="M6.100 1.200Q6.700 0 8.100 0H125.900Q127.300 0 127.900 1.200L133.500 10.800Q134 12 133.500 13.200L127.900 22.800Q127.300 24 125.900 24H8.100Q6.700 24 6.100 22.800L.5 13.200Q0 12 .5 10.800Z" fill="#48c5b9"/></svg><b>In Use</b></span>
</div>
<div class="row" style="top:466px">
<span class="cb" style="left:562px;top:9px"></span>
<a class="c lnk" style="left:718px;letter-spacing:-0.161px">MONITOR-46V</a>
<span class="c c1" style="left:868px;letter-spacing:0.217px">456257/35546/ET</span>
<span class="c c2" style="left:1022px;letter-spacing:0.249px">L28u-35</span>
<span class="c c3" style="left:1175px;letter-spacing:0.19px">Lenovo</span>
<span class="c c4" style="left:1325px;letter-spacing:-0.043px">Open space - IT</span>
<span class="c c5" style="left:1480px;letter-spacing:-0.058px">Liam Smith</span>
<span class="badge use"><svg width="134" height="24" viewBox="0 0 134 24"><path d="M6.100 1.200Q6.700 0 8.100 0H125.900Q127.300 0 127.900 1.200L133.500 10.800Q134 12 133.500 13.200L127.900 22.800Q127.300 24 125.900 24H8.100Q6.700 24 6.100 22.800L.5 13.200Q0 12 .5 10.800Z" fill="#48c5b9"/></svg><b>In Use</b></span>
</div>
<div class="row" style="top:497px">
<span class="cb" style="left:562px;top:9px"></span>
<a class="c lnk" style="left:718px;letter-spacing:-0.0px">MONITOR-44W</a>
<span class="c c1" style="left:868px;letter-spacing:0.217px">456249/35546/ET</span>
<span class="c c2" style="left:1022px;letter-spacing:0.249px">L28u-35</span>
<span class="c c3" style="left:1175px;letter-spacing:0.19px">Lenovo</span>
<span class="c c4" style="left:1325px;letter-spacing:0.02px">Room - Developers</span>
<span class="c c5" style="left:1480px;letter-spacing:0.141px">Benjamin Anderson</span>
<span class="badge use"><svg width="134" height="24" viewBox="0 0 134 24"><path d="M6.100 1.200Q6.700 0 8.100 0H125.900Q127.300 0 127.900 1.200L133.500 10.800Q134 12 133.500 13.200L127.900 22.800Q127.300 24 125.900 24H8.100Q6.700 24 6.100 22.800L.5 13.200Q0 12 .5 10.800Z" fill="#48c5b9"/></svg><b>In Use</b></span>
</div>
<div class="row" style="top:528px">
<span class="cb" style="left:562px;top:9px"></span>
<a class="c lnk" style="left:718px;letter-spacing:-0.171px">MONITOR-45B</a>
<span class="c c1" style="left:868px;letter-spacing:0.217px">456263/35546/ET</span>
<span class="c c2" style="left:1022px;letter-spacing:0.249px">L28u-35</span>
<span class="c c3" style="left:1175px;letter-spacing:0.19px">Lenovo</span>
<span class="c c4" style="left:1325px;letter-spacing:0.02px">Room - Developers</span>
<span class="c c5" style="left:1480px;letter-spacing:0.141px">Benjamin Anderson</span>
<span class="badge use"><svg width="134" height="24" viewBox="0 0 134 24"><path d="M6.100 1.200Q6.700 0 8.100 0H125.900Q127.300 0 127.900 1.200L133.500 10.800Q134 12 133.500 13.200L127.900 22.800Q127.300 24 125.900 24H8.100Q6.700 24 6.100 22.800L.5 13.200Q0 12 .5 10.800Z" fill="#48c5b9"/></svg><b>In Use</b></span>
</div>
<div class="row" style="top:559px">
<span class="cb" style="left:562px;top:9px"></span>
<a class="c lnk" style="left:718px;letter-spacing:-0.145px">MONITOR-45Q</a>
<span class="c c1" style="left:868px;letter-spacing:0.217px">456261/35546/ET</span>
<span class="c c2" style="left:1022px;letter-spacing:0.249px">L28u-35</span>
<span class="c c3" style="left:1175px;letter-spacing:0.19px">Lenovo</span>
<span class="c c4" style="left:1325px;letter-spacing:0.068px">Room - Management</span>
<span class="c c5" style="left:1480px;letter-spacing:-0.011px">Daniel Nelson</span>
<span class="badge use"><svg width="134" height="24" viewBox="0 0 134 24"><path d="M6.100 1.200Q6.700 0 8.100 0H125.900Q127.300 0 127.900 1.200L133.500 10.800Q134 12 133.500 13.200L127.900 22.800Q127.300 24 125.900 24H8.100Q6.700 24 6.100 22.800L.5 13.200Q0 12 .5 10.800Z" fill="#48c5b9"/></svg><b>In Use</b></span>
</div>
<div class="row" style="top:590px">
<span class="cb" style="left:562px;top:9px"></span>
<a class="c lnk" style="left:718px;letter-spacing:-0.261px">MONITOR-45E</a>
<span class="c c1" style="left:868px;letter-spacing:0.217px">456253/35546/ET</span>
<span class="c c2" style="left:1022px;letter-spacing:0.249px">L28u-35</span>
<span class="c c3" style="left:1175px;letter-spacing:0.19px">Lenovo</span>
<span class="c c4" style="left:1325px;letter-spacing:0.068px">Room - Management</span>
<span class="c c5" style="left:1480px;letter-spacing:-0.077px">Sophia Baker</span>
<span class="badge use"><svg width="134" height="24" viewBox="0 0 134 24"><path d="M6.100 1.200Q6.700 0 8.100 0H125.900Q127.300 0 127.900 1.200L133.500 10.800Q134 12 133.500 13.200L127.900 22.800Q127.300 24 125.900 24H8.100Q6.700 24 6.100 22.800L.5 13.200Q0 12 .5 10.800Z" fill="#48c5b9"/></svg><b>In Use</b></span>
</div>
<div class="row hov" style="top:621px">
<span class="cb" style="left:562px;top:9px"></span>
<svg style="left:600px;top:-5px" width="110" height="40" viewBox="600 616 110 40"><path d="M606.25 636.1L612.85 623.30H629.15L635.75 636.1L629.15 648.90H612.85ZM638.85 636.1L645.45 623.30H661.75L668.35 636.1L661.75 648.90H645.45ZM671.45 636.1L678.05 623.30H694.35L700.95 636.1L694.35 648.90H678.05Z" fill="#e0e4fb"/>
<path d="M613.700 636.100Q617.200 630.600 621.200 630.600T628.600 636.100Q625.200 641.700 621.200 641.700T613.700 636.100Z" fill="#8c91e7"/><circle cx="621.200" cy="636.100" r="3.300" fill="#f4f4fd"/><circle cx="621.300" cy="636.300" r="2.300" fill="#2d31cf"/><circle cx="620.300" cy="635.200" r="1.050" fill="#f4f4fd"/>
<g fill="none" stroke="#3d41d3" stroke-width="1.200" stroke-linejoin="round" stroke-linecap="round"><path d="M652.600 632H649.700Q648.300 632 648.300 633.400V640.400Q648.300 641.800 649.700 641.800H656.800Q658.200 641.800 658.200 640.400V637.500"/><path d="M652 638.400L652.500 636L657.900 630.600Q658.900 629.800 659.900 630.700Q660.800 631.700 660 632.700L654.500 638Z"/>
<path d="M680.900 632.400H691.600M683.900 632.200V631Q683.900 630.200 684.700 630.200H687.800Q688.600 630.200 688.600 631V632.200M682 632.600L682.400 640.800Q682.500 641.900 683.600 641.900H688.900Q690 641.900 690.100 640.800L690.500 632.600"/><path d="M684.100 634.500V639.800M686.250 634.500V639.800M688.400 634.500V639.800" stroke-width="1.100"/></g></svg>
<span class="c lnk" style="left:718px">-</span>
<span class="c lnk" style="left:868px;letter-spacing:0.105px">123</span>
<span class="c lnk" style="left:1022px;letter-spacing:0.025px">ThinkPad L15</span>
<span class="c lnk" style="left:1175px;letter-spacing:0.19px">Lenovo</span>
<span class="c lnk" style="left:1325px;letter-spacing:0.02px">Room - Developers</span>
<span class="badge stock"><svg width="134" height="24" viewBox="0 0 134 24"><path d="M6.100 1.200Q6.700 0 8.100 0H125.900Q127.300 0 127.900 1.200L133.500 10.800Q134 12 133.500 13.200L127.900 22.800Q127.300 24 125.900 24H8.100Q6.700 24 6.100 22.800L.5 13.200Q0 12 .5 10.800Z" fill="#a6e355"/></svg><b>In Stock</b></span>
</div>
<div class="vscroll"><i class="up"></i><i class="dn"></i></div>
<div style="left:554px;top:652px;width:1297px;height:1px;background:#dedfe6"></div>
<svg style="left:571px;top:670px" width="9" height="10" viewBox="0 0 9 10"><path d="M.2 .5H1.800V9.500H.2zM8.800 .5V9.500L2.500 5z" fill="#5a5a60"/></svg>
<svg style="left:604px;top:670px" width="7" height="10" viewBox="0 0 7 10"><path d="M6.800 .5V9.500L.3 5z" fill="#5a5a60"/></svg>
<div style="left:622px;top:660px;width:31px;height:31px;background:#cacdf1"></div>
<span class="pg" style="left:622px;width:31px;text-align:center;color:#3f46d2">1</span>
<svg style="left:665px;top:670px" width="7" height="10" viewBox="0 0 7 10"><path d="M.2 .5V9.500L6.700 5z" fill="#5a5a60"/></svg>
<svg style="left:694px;top:670px" width="9" height="10" viewBox="0 0 9 10"><path d="M7.200 .5H8.800V9.500H7.200zM.2 .5V9.500L6.500 5z" fill="#5a5a60"/></svg>
<span class="pg" style="left:728px;letter-spacing:-0.153px">Page</span>
<div style="left:765px;top:660px;width:65px;height:31px;border:1px solid #e6e8f6;border-radius:5px;background:#f8f8fb"></div>
<span class="pg" style="left:777px">1</span>
<span class="pg" style="left:837px;letter-spacing:-0.394px">of 1</span>
<div style="left:871px;top:660px;width:65px;height:31px;border:1px solid #e6e8f6;border-radius:5px;background:#f8f8fb"></div>
<div style="left:908px;top:661px;width:27px;height:29px;background:#e8ecfc;border-radius:0 4px 4px 0"></div>
<span class="pg" style="left:882px">20</span>
<svg style="left:918px;top:672px" width="8" height="6" viewBox="0 0 8 6"><path d="M0 0h8L4 5.500z" fill="#2b33d1"/></svg>
<span class="pg" style="left:943px;letter-spacing:0.07px">items per page</span>
<span class="pg" style="left:1706px;letter-spacing:-0.006px">1 - 11 of 11 items</span>
<svg style="left:1823px;top:667px" width="16" height="17" viewBox="0 0 16 17"><path d="M8 3.200A6 6 0 1 0 14 9.200" fill="none" stroke="#222" stroke-width="1.700"/><path d="M7.200 0L11.500 3.200 7.200 6.400Z" fill="#222"/></svg>
</div>
<svg class="arrow" width="70" height="130" viewBox="570 510 70 130"><path d="M575 519.4L576.500 518.200L617.700 606L622.100 601L621.600 628.400L600.600 609.300L608.200 610.700Z" fill="#8fd343"/></svg>
</body></html>
